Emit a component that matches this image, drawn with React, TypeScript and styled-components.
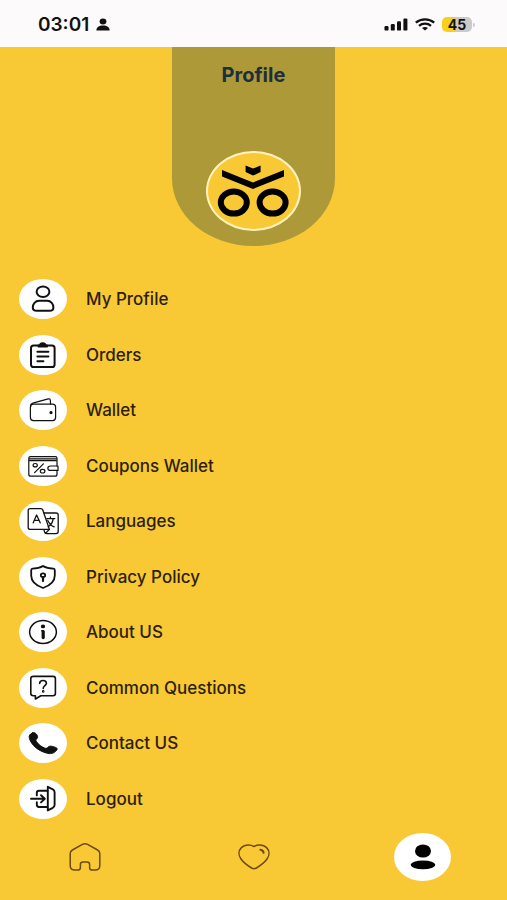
import React from "react";
import styled, { createGlobalStyle, css } from "styled-components";

const GlobalStyle = createGlobalStyle`
  *, *::before, *::after { box-sizing: border-box; }
  body { margin: 0; background: #f9c935; font-family: Inter, "Open Sans", sans-serif; }
`;

const Page = styled.div`
  min-height: 100vh;
  display: flex;
  flex-direction: column;
  background: #f9c935;
  color: #2c1f0c;
`;

const StatusBar = styled.header`
  height: 47px;
  flex: none;
  display: flex;
  align-items: center;
  justify-content: space-between;
  padding: 2px 32px 0 38px;
  background: #fcfafb;
  color: #111;
`;

const StatusGroup = styled.div`
  display: flex;
  align-items: center;
  gap: 7px;
`;

const Clock = styled.time`
  font-size: 19px;
  line-height: 20px;
  font-weight: 600;
`;

const BatteryGroup = styled.span`
  display: flex;
  align-items: center;
  gap: 1px;
`;

const Battery = styled.span`
  width: 30px;
  height: 15px;
  border-radius: 5px;
  background: linear-gradient(90deg, #f7cf1d 45%, #cbcacb 45%);
  font-size: 14px;
  line-height: 15px;
  font-weight: 700;
  text-align: center;
`;

const BatteryTip = styled.span`
  width: 2px;
  height: 4px;
  border-radius: 0 2px 2px 0;
  background: #cbcacb;
`;

const ProfilePanel = styled.section`
  width: 32%;
  min-width: 140px;
  align-self: center;
  display: flex;
  flex-direction: column;
  align-items: center;
  gap: 62px;
  padding: 15px 0;
  border-radius: 0 0 50% 50% / 0 0 34% 34%;
  background: #ae9938;
`;

const Title = styled.h1`
  margin: 0;
  font-size: 20px;
  line-height: 27px;
  font-weight: 700;
  color: #1d2f3c;
`;

const Avatar = styled.div`
  width: 95px;
  height: 80px;
  border: 2px solid #fff3c0;
  border-radius: 50%;
  background: #f9c935;
  display: flex;
  align-items: center;
  justify-content: center;
`;

const Menu = styled.ul`
  flex: 1;
  margin: 0;
  padding: 33px 19px 14px;
  list-style: none;
  display: flex;
  flex-direction: column;
  justify-content: space-between;
  gap: 8px;
`;

const MenuButton = styled.button`
  width: 100%;
  display: flex;
  align-items: center;
  gap: 19px;
  padding: 0;
  border: 0;
  background: none;
  color: inherit;
  font-family: inherit;
  font-size: 17px;
  line-height: 24px;
  font-weight: 500;
  text-align: left;
  cursor: pointer;
`;

const IconDisc = styled.span`
  flex: none;
  width: 48px;
  height: 40px;
  border-radius: 50%;
  background: #fff;
`;

const LineIcon = styled.svg<{ $weight: number }>`
  display: block;
  fill: none;
  stroke: #111;
  stroke-width: ${(p) => p.$weight};
  stroke-linecap: round;
  stroke-linejoin: round;
`;

const TabBar = styled.nav`
  display: grid;
  grid-template-columns: repeat(3, 1fr);
  justify-items: center;
  align-items: center;
  padding-bottom: 19px;
`;

const Tab = styled.a<{ $active?: boolean }>`
  width: 57px;
  height: 48px;
  display: flex;
  align-items: center;
  justify-content: center;
  border-radius: 50%;
  ${(p) =>
    p.$active &&
    css`
      background: #fff;
    `}
`;

const TabIcon = styled.svg`
  fill: none;
  stroke: #6b4a0c;
  stroke-width: 1.5;
  stroke-linejoin: round;
  stroke-linecap: round;
`;

type Item = { label: string; weight: number; icon: React.ReactNode };

const items: Item[] = [
  {
    label: "My Profile",
    weight: 2,
    icon: (
      <>
        <ellipse cx="24" cy="12.8" rx="6.4" ry="5.3" />
        <path d="M20.2 21.8H28.2C32 21.8 34.4 25 34.4 28.4C34.4 30.8 32.9 31.8 30.6 31.8H17.8C15.4 31.8 13.8 30.8 13.8 28.4C13.8 25 16.2 21.8 20.2 21.8Z" />
      </>
    ),
  },
  {
    label: "Orders",
    weight: 2,
    icon: (
      <>
        <rect x="12" y="10.6" width="23.6" height="21.4" rx="2.6" />
        <path d="M19.5 11.5V10.4H21C21.2 7.6 26.2 7.6 26.4 10.4H28V11.5Z" fill="#111" />
        <path d="M18.4 16.8H29.4M18.4 21.4H29.4M18.4 26.2H24.4" />
      </>
    ),
  },
  {
    label: "Wallet",
    weight: 1.2,
    icon: (
      <>
        <rect x="11.4" y="14.2" width="25.2" height="16.4" rx="3" />
        <path d="M11.6 16.6C11.4 14.4 12.2 13.4 14.6 12.8L29.2 8.9C30.6 8.6 31.2 9.2 31.3 10.2L31.6 14" />
        <circle cx="32" cy="22.6" r="1" fill="#111" />
      </>
    ),
  },
  {
    label: "Coupons Wallet",
    weight: 1.2,
    icon: (
      <>
        <path d="M38 20V12.2C38 11 37.4 10.6 36.4 10.6H11.4C10.2 10.6 9.8 11.2 9.8 12.2V28.2C9.8 29.6 10.6 30.2 11.8 30.2H36C37.4 30.2 38 29.6 38 28.2V24.6" />
        <path d="M10.4 12.8H37.4M10.4 14.6H37.4" />
        <path d="M39 20H31.4C28 20 28 24.4 31.4 24.4H39Z" />
        <path d="M15.6 26.6L24.4 17.8" />
        <ellipse cx="16.2" cy="19.2" rx="2.1" ry="1.7" />
        <ellipse cx="23.6" cy="25.2" rx="2.3" ry="1.8" />
      </>
    ),
  },
  {
    label: "Languages",
    weight: 1.3,
    icon: (
      <>
        <path d="M11.4 7.6H21.8C22.8 7.6 23.4 8 23.7 8.8L30.4 28.4H11.4C10 28.4 9.2 27.8 9.2 26.4V9.6C9.2 8.2 10 7.6 11.4 7.6Z" />
        <path d="M25 12H37C38.6 12 39.2 12.6 39.2 14V30.6C39.2 32 38.6 32.6 37 32.6H27.8C26.6 32.6 26 32.2 25.7 31.2L24.8 28.6M30.4 28.4L26.6 32.2" />
        <path d="M14.2 21.8L17.6 14L21.2 21.8M15.4 19.4H20" />
        <path d="M27.8 17.6H35.8M31.4 17.4V16M34.2 17.8C33.6 21.4 31.6 24.2 29.2 25.8M28.8 19.4C30.2 22.4 32.4 24.8 35.2 25.8" />
      </>
    ),
  },
  {
    label: "Privacy Policy",
    weight: 1.8,
    icon: (
      <>
        <path d="M24 9C21.2 10.8 17.8 11.6 13.6 11.7C12.6 11.8 12.2 12.2 12.2 13.2V18.6C12.2 25 17.4 28.8 24 31C30.6 28.8 35.8 25 35.8 18.6V13.2C35.8 12.2 35.4 11.8 34.4 11.7C30.2 11.6 26.8 10.8 24 9Z" />
        <ellipse cx="24" cy="18.2" rx="2.2" ry="1.8" />
        <path d="M24 20V24" strokeWidth="2.2" />
      </>
    ),
  },
  {
    label: "About US",
    weight: 1.5,
    icon: (
      <>
        <ellipse cx="24" cy="20" rx="13.4" ry="11.4" />
        <ellipse cx="24" cy="14.4" rx="1.4" ry="1.1" fill="#111" />
        <path d="M22.8 18.8H24" />
        <path d="M24.2 19.6V25.6" strokeWidth="3.2" />
      </>
    ),
  },
  {
    label: "Common Questions",
    weight: 1.6,
    icon: (
      <>
        <path d="M14.4 8.4H34C35.6 8.4 36.4 9.2 36.4 10.6V25.6C36.4 27 35.6 27.8 34 27.8H21.8L16.4 31V27.8H14.4C12.6 27.8 11.8 27 11.8 25.6V10.6C11.8 9.2 12.6 8.4 14.4 8.4Z" />
        <path d="M20.6 15.4C20.8 11.4 27.4 11.6 27.4 15.2C27.4 17.6 24.2 17.8 24.2 20.4" />
        <circle cx="24.2" cy="23.4" r="0.5" />
      </>
    ),
  },
  {
    label: "Contact US",
    weight: 1,
    icon: (
      <path
        d="M13.6 9.8C15.6 9.2 17 10.2 18 12C19 14 18.8 15.2 17.4 16.2C16.6 16.8 16.8 17.6 17.6 18.8C19.6 21.6 22.4 23.8 25.6 25C27 25.6 27.8 25.4 28.6 24.6C29.8 23.2 31.4 22.8 33.4 23.4L36.6 24.4C38.4 25 38.6 26.2 37.4 27.6C34.8 30.6 31.4 31.2 27.2 30C19 27.6 12.4 22 10.4 15.4C9.6 12.8 10.8 10.8 13.6 9.8Z"
        fill="#111"
      />
    ),
  },
  {
    label: "Logout",
    weight: 1.9,
    icon: (
      <>
        <path d="M28.8 7.8L33.8 10.4C35.2 11.2 35.6 11.8 35.6 13.2V26C35.6 27.4 35.2 28 33.8 28.8L28.8 31.4Z" />
        <path d="M28.4 11.8H20C18.4 11.8 17.8 12.6 17.8 14V16.4M17.8 23.2V25.6C17.8 27.2 18.4 28 20 28H28.4" />
        <path d="M12 19.8H25.4M22 16.2L25.8 19.8L22 23.4" />
      </>
    ),
  },
];

export default function App() {
  return (
    <Page>
      <GlobalStyle />
      <StatusBar>
        <StatusGroup>
          <Clock>03:01</Clock>
          <svg width="14" height="13" viewBox="0 0 14 13" fill="#111" aria-hidden="true">
            <ellipse cx="7" cy="3.4" rx="3.4" ry="3" />
            <path d="M0.4 12.4C0.4 9.2 3 7.6 7 7.6S13.6 9.2 13.6 12.4Z" />
          </svg>
        </StatusGroup>
        <StatusGroup>
          <svg width="24" height="13" viewBox="0 0 24 13" fill="#111" aria-hidden="true">
            <rect x="0.5" y="8" width="4" height="4.6" rx="1.2" />
            <rect x="6.8" y="6" width="4" height="6.6" rx="1.2" />
            <rect x="13" y="3.2" width="4" height="9.4" rx="1.2" />
            <rect x="19.4" y="0.4" width="4" height="12.2" rx="1.2" />
          </svg>
          <svg width="20" height="13" viewBox="0 0 20 13" fill="none" stroke="#111" strokeWidth="2.3" aria-hidden="true">
            <path d="M0.8 4.6C6 0.2 14 0.2 19.2 4.6" />
            <path d="M4 7.8C7.4 5 12.6 5 16 7.8" />
            <path d="M7 10C8.8 8.6 11.2 8.6 13 10L10 12.6Z" fill="#111" stroke="none" />
          </svg>
          <BatteryGroup>
            <Battery>45</Battery>
            <BatteryTip />
          </BatteryGroup>
        </StatusGroup>
      </StatusBar>

      <ProfilePanel>
        <Title>Profile</Title>
        <Avatar>
          <svg width="74" height="54" viewBox="0 0 74 54" role="img" aria-label="Profile picture">
            <path d="M29.6 1.6L37 4.6L44.6 1.6V8L37 11.6L29.6 8Z" />
            <path d="M6 6L37 18.4L68 6V12.4L37 25L6 12.4Z" />
            <g fill="none" stroke="#000" strokeWidth="6">
              <ellipse cx="17.8" cy="38.6" rx="13" ry="11" />
              <ellipse cx="56.6" cy="38.6" rx="13" ry="11" />
            </g>
          </svg>
        </Avatar>
      </ProfilePanel>

      <Menu>
        {items.map((item) => (
          <li key={item.label}>
            <MenuButton type="button">
              <IconDisc>
                <LineIcon $weight={item.weight} width="48" height="40" viewBox="0 0 48 40" aria-hidden="true">
                  {item.icon}
                </LineIcon>
              </IconDisc>
              {item.label}
            </MenuButton>
          </li>
        ))}
      </Menu>

      <TabBar>
        <Tab href="#home" aria-label="Home">
          <TabIcon width="32" height="28" viewBox="0 0 32 28">
            <path d="M13.4 1.4Q16 0.2 18.6 1.4L28.6 7Q30.8 8.4 30.8 10.6V22.4Q30.8 27 26 27H23.4Q20.6 27 20.6 24.4V21.4Q20.6 19 18 19H14Q11.4 19 11.4 21.4V24.4Q11.4 27 8.6 27H6Q1.2 27 1.2 22.4V10.6Q1.2 8.4 3.4 7Z" />
          </TabIcon>
        </Tab>
        <Tab href="#favorites" aria-label="Favorites">
          <TabIcon width="32" height="26" viewBox="0 0 32 26">
            <path d="M16 2.6C12.6 0.4 6.8 0.4 3.4 3.6C0.2 6.8 0.4 11.4 3 15C5.6 18.6 9.6 21.6 13.6 24Q16 25.4 18.4 24C22.4 21.6 26.4 18.6 29 15C31.6 11.4 31.8 6.8 28.6 3.6C25.2 0.4 19.4 0.4 16 2.6Z" />
            <path d="M22.4 5.8Q25.2 6.2 25.6 8.8" strokeWidth="2" />
          </TabIcon>
        </Tab>
        <Tab href="#profile" aria-label="Profile" aria-current="page" $active>
          <svg width="26" height="26" viewBox="0 0 26 26">
            <ellipse cx="13" cy="7" rx="8" ry="6.6" />
            <ellipse cx="13" cy="20.8" rx="12.2" ry="4.4" />
          </svg>
        </Tab>
      </TabBar>
    </Page>
  );
}
